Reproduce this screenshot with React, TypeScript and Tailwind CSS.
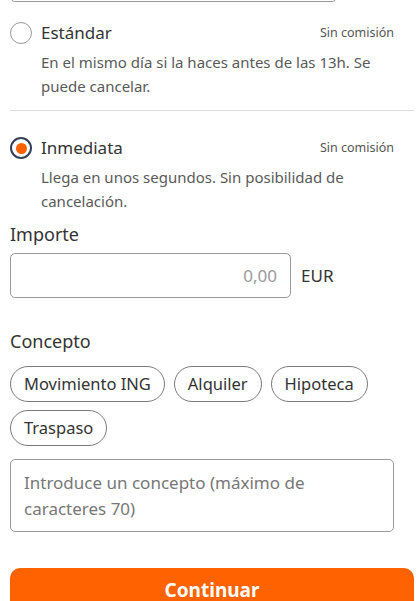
import React from "react";

const font = { fontFamily: '"Noto Sans", "Open Sans", sans-serif' };

function Option({ selected, title, desc }: { selected: boolean; title: string; desc: string }) {
  return (
    <div className="flex">
      <div className="w-[31px] shrink-0 pt-[11px]">
        {selected ? (
          <div className="w-[22px] h-[22px] rounded-full border-[2px] border-[#34405a] flex items-center justify-center">
            <div className="w-[11px] h-[11px] rounded-full bg-[#ff6200]" />
          </div>
        ) : (
          <div className="w-[22px] h-[22px] rounded-full border-[1.5px] border-[#9a9a9a]" />
        )}
      </div>
      <div className="flex-1 pr-[16px]">
        <div className="flex items-center justify-between h-[44px]">
          <span className="text-[17px] text-[#333]">{title}</span>
          <span className="text-[12.5px] text-[#555]">Sin comisión</span>
        </div>
        <p className="text-[15px] leading-[24px] text-[#5a5a5a] -mt-[5px] pr-[10px]">{desc}</p>
      </div>
    </div>
  );
}

export default function App() {
  return (
    <div className="w-[420px] h-[601px] overflow-hidden bg-white px-[10px]" style={font}>
      <div className="h-[40px] -mt-[38px] mr-[73px] border border-[#999] rounded-[5px]" />
      <div className="pt-[9px]">
        <Option
          selected={false}
          title="Estándar"
          desc="En el mismo día si la haces antes de las 13h. Se puede cancelar."
        />
      </div>
      <div className="h-px bg-[#dcdcdc] mt-[12px] mr-[-4px]" />
      <div className="pt-[15px]">
        <Option
          selected={true}
          title="Inmediata"
          desc="Llega en unos segundos. Sin posibilidad de cancelación."
        />
      </div>
      <div className="text-[18px] text-[#333] mt-[8px] leading-[26px]">Importe</div>
      <div className="flex items-center mt-[6px]">
        <div className="w-[281px] h-[45px] border border-[#9a9a9a] rounded-[5px] flex items-center justify-end pr-[13px] text-[17px] text-[#9a9a9a]">
          0,00
        </div>
        <span className="ml-[10px] text-[17px] text-[#333]">EUR</span>
      </div>
      <div className="text-[18px] text-[#333] mt-[30px] leading-[26px]">Concepto</div>
      <div className="flex flex-wrap gap-x-[9px] gap-y-[8px] mt-[12px] w-[380px]">
        {["Movimiento ING", "Alquiler", "Hipoteca", "Traspaso"].map((c) => (
          <div
            key={c}
            className="h-[36px] px-[13px] rounded-full border border-[#7a7a7a] flex items-center text-[16.5px] text-[#333]"
          >
            {c}
          </div>
        ))}
      </div>
      <div className="mt-[13px] w-[384px] h-[73px] border border-[#9a9a9a] rounded-[5px] px-[13px] pt-[10px] text-[17px] leading-[26px] text-[#777]">
        Introduce un concepto (máximo de caracteres 70)
      </div>
      <div className="mt-[36px] h-[50px] mr-[-4px] rounded-[10px] bg-[#ff6200] flex justify-center pt-[8px] text-[19px] font-bold text-white">
        Continuar
      </div>
    </div>
  );
}
